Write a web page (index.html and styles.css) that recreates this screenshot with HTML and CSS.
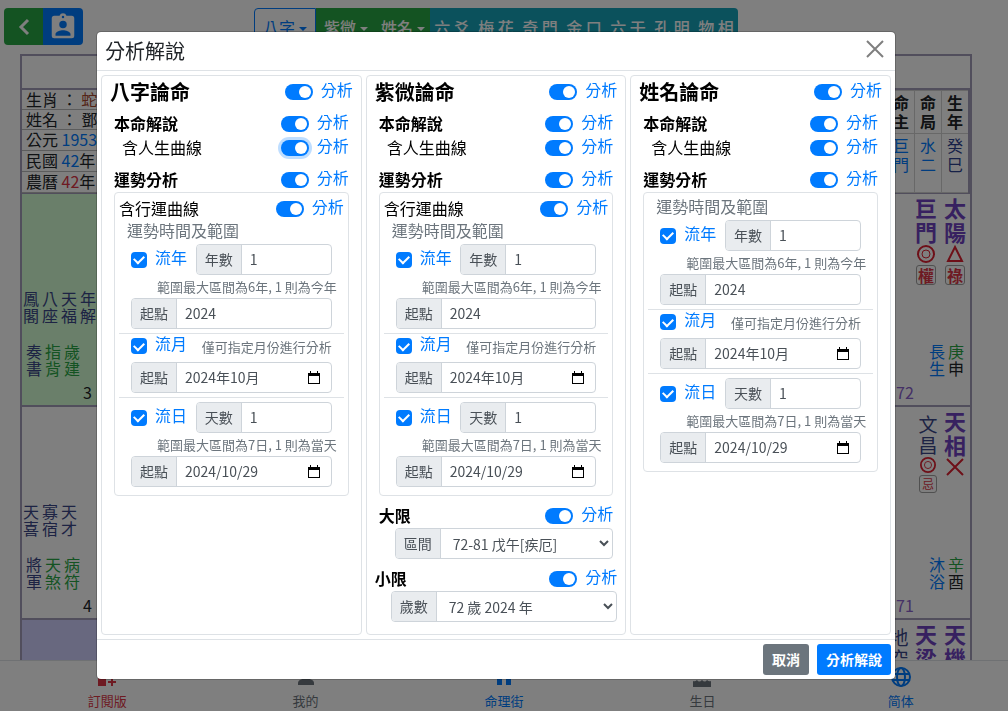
FILE: index.html
```html
<!DOCTYPE html>
<html lang="zh-TW">
<head>
<meta charset="utf-8">
<meta name="viewport" content="width=device-width, initial-scale=1">
<title>分析解說</title>
<link rel="stylesheet" href="styles.css">
</head>
<body>
<div class="page">
  <header class="topbar">
    <div class="tools">
      <button class="tool green" type="button" aria-label="返回"><svg width="24" height="24" viewBox="0 0 24 24" fill="none" stroke="currentColor" stroke-width="3"><path d="M16 5l-7 7 7 7"/></svg></button>
      <button class="tool blue" type="button" aria-label="個人資料"><svg width="30" height="30" viewBox="0 0 24 24" fill="currentColor"><path d="M19 3h-4.2a3 3 0 0 0-5.600 0H5a2 2 0 0 0-2 2v14a2 2 0 0 0 2 2h14a2 2 0 0 0 2-2V5a2 2 0 0 0-2-2zm-7 0a1 1 0 1 1 0 2 1 1 0 0 1 0-2zm0 4a3 3 0 1 1 0 6 3 3 0 0 1 0-6zm6 12H6v-1.400c0-2 4-3.100 6-3.100s6 1.100 6 3.100z"/></svg></button>
    </div>
    <nav class="tabs">
      <button class="tab outline caret" type="button">八字</button>
      <button class="tab green caret" type="button">紫微</button>
      <button class="tab green caret" type="button">姓名</button>
      <button class="tab teal" type="button">六 爻</button>
      <button class="tab teal" type="button">梅 花</button>
      <button class="tab teal" type="button">奇 門</button>
      <button class="tab teal" type="button">金 口</button>
      <button class="tab teal" type="button">六 壬</button>
      <button class="tab teal" type="button">孔 明</button>
      <button class="tab teal" type="button">物 相</button>
    </nav>
  </header>

  <main class="main">
    <div class="chart">
      <div class="chart-title"></div>
      <div class="chart-info">
        <div class="person">
          <p>生肖 ： <span class="brown">蛇</span></p>
          <p>姓名 ： 鄧</p>
          <p>公元 <span class="azure">1953</span></p>
          <p>民國 <span class="azure">42</span>年</p>
          <p>農曆 <span class="red">42</span>年</p>
        </div>
        <table class="birth">
          <tr><th>命主</th><th>命局</th><th>生年</th></tr>
          <tr><td class="azure">巨門</td><td class="azure">水二</td><td class="navy">癸巳</td></tr>
        </table>
      </div>
      <div class="row">
        <div class="cell mint">
          <div class="stars"><span>鳳閣</span><span>八座</span><span>天福</span><span>年解</span></div>
          <div class="stars gods"><span>奏書</span><span class="leaf">指背</span><span class="leaf">歲建</span></div>
          <div class="num">3</div>
        </div>
        <div class="cell right">
          <div class="majors">
            <div class="major"><b>巨門</b><svg width="18" height="18" viewBox="0 0 18 18" class="mark"><circle cx="9" cy="9" r="8"/><circle class="thin" cx="9" cy="9" r="4"/></svg><i class="chip">權</i></div>
            <div class="major"><b>太陽</b><svg width="18" height="18" viewBox="0 0 18 18" class="mark"><path d="M9 2l7 14H2z"/></svg><i class="chip">祿</i></div>
          </div>
          <div class="stars branch"><span class="azure">長生</span><span><em class="leaf">庚</em><em class="dark">申</em></span></div>
          <div class="age">72</div>
        </div>
      </div>
      <div class="row">
        <div class="cell">
          <div class="stars"><span>天喜</span><span>寡宿</span><span>天才</span></div>
          <div class="stars gods"><span>將軍</span><span class="leaf">天煞</span><span class="leaf">病符</span></div>
          <div class="num">4</div>
        </div>
        <div class="cell right">
          <div class="majors">
            <div class="major minor"><span>文昌</span><svg width="16" height="16" viewBox="0 0 18 18" class="mark"><circle cx="9" cy="9" r="8"/><circle class="thin" cx="9" cy="9" r="4"/></svg><i class="chip">忌</i></div>
            <div class="major"><b>天相</b><svg width="18" height="18" viewBox="0 0 18 18" class="mark"><path d="M1 1l16 16M17 1L1 17"/></svg></div>
          </div>
          <div class="stars branch"><span class="azure">沐浴</span><span><em class="leaf">辛</em><em class="dark">酉</em></span></div>
          <div class="age">71</div>
        </div>
      </div>
      <div class="row">
        <div class="cell lilac"></div>
        <div class="cell right">
          <div class="majors">
            <div class="major minor"><span>地空</span></div>
            <div class="major"><b>天梁</b></div>
            <div class="major"><b>天機</b></div>
          </div>
        </div>
      </div>
    </div>
  </main>

  <nav class="bottom">
    <a class="red" href="#"><svg width="22" height="22" viewBox="0 0 22 22" fill="currentColor"><path d="M2 2h8v8H2zM12 2h8v8h-8zM2 12h8v8H2zM15 12h2v3h3v2h-3v3h-2v-3h-3v-2h3z"/></svg>訂閱版</a>
    <a href="#"><svg width="22" height="22" viewBox="0 0 22 22" fill="currentColor"><circle cx="11" cy="6" r="5"/><path d="M3 19v-2c0-6 16-6 16 0v2z"/></svg>我的</a>
    <a class="azure" href="#"><svg width="22" height="22" viewBox="0 0 22 22" fill="currentColor"><path d="M2 5l9-4 9 4v3H2zM4 9h5v10H4zM13 9h5v10h-5z"/></svg>命理街</a>
    <a href="#"><svg width="22" height="22" viewBox="0 0 22 22" fill="currentColor"><path d="M10 1h2v6h6q2 0 2 3v2q-2 2-4 0-2 2-5 0-3 2-5 0-2 2-4 0v-2q0-3 2-3h6zM2 15q2 1 4-1 2 3 5 0 3 3 5 0 2 2 4 1v6H2z"/></svg>生日</a>
    <a class="azure" href="#"><svg width="22" height="22" viewBox="0 0 22 22" fill="none" stroke="currentColor" stroke-width="2"><circle cx="11" cy="11" r="9"/><ellipse cx="11" cy="11" rx="4" ry="9"/><path d="M3 8h16M3 14h16"/></svg>简体</a>
  </nav>
</div>

<div class="backdrop">
  <section class="modal" role="dialog" aria-modal="true" aria-labelledby="dialog-title">
    <header class="modal-head">
      <h1 id="dialog-title">分析解說</h1>
      <button class="close" type="button" aria-label="關閉"><svg width="18" height="18" viewBox="0 0 18 18" fill="none" stroke="currentColor" stroke-width="2"><path d="M1 1l16 16M17 1L1 17"/></svg></button>
    </header>

    <div class="modal-body">
      <div class="card">
        <div class="line title"><h2>八字論命</h2><label class="switch"><input type="checkbox" checked><span>分析</span></label></div>
        <div class="inner">
          <div class="line"><h3>本命解說</h3><label class="switch"><input type="checkbox" checked><span>分析</span></label></div>
          <div class="line sub"><p>含人生曲線</p><label class="switch"><input class="focus" type="checkbox" checked><span>分析</span></label></div>
          <div class="line section"><h3>運勢分析</h3><label class="switch"><input type="checkbox" checked><span>分析</span></label></div>
          <div class="box">
            <div class="line"><p>含行運曲線</p><label class="switch"><input type="checkbox" checked><span>分析</span></label></div>
            <p class="caption">運勢時間及範圍</p>
            <div class="block">
              <div class="pick"><label class="check"><input type="checkbox" checked><span>流年</span></label><div class="group"><label for="a-years">年數</label><input id="a-years" type="text" value="1"></div></div>
              <small class="hint">範圍最大區間為6年, 1 則為今年</small>
              <div class="group"><label for="a-year">起點</label><input id="a-year" type="text" value="2024"></div>
            </div>
            <div class="block monthly">
              <div class="pick"><label class="check"><input type="checkbox" checked><span>流月</span></label><small>僅可指定月份進行分析</small></div>
              <div class="group date"><label for="a-month">起點</label><input id="a-month" type="text" value="2024年10月"><button type="button" aria-label="選擇月份"><svg width="14" height="14" viewBox="0 0 14 14"><path d="M3 0h1v2h6V0h1v2h2v11H1V2h2zM2 5v7h10V5z" fill-rule="evenodd"/></svg></button></div>
            </div>
            <div class="block">
              <div class="pick"><label class="check"><input type="checkbox" checked><span>流日</span></label><div class="group"><label for="a-days">天數</label><input id="a-days" type="text" value="1"></div></div>
              <small class="hint">範圍最大區間為7日, 1 則為當天</small>
              <div class="group date"><label for="a-date">起點</label><input id="a-date" type="text" value="2024/10/29"><button type="button" aria-label="選擇日期"><svg width="14" height="14" viewBox="0 0 14 14"><path d="M3 0h1v2h6V0h1v2h2v11H1V2h2zM2 5v7h10V5z" fill-rule="evenodd"/></svg></button></div>
            </div>
          </div>
        </div>
      </div>

      <div class="card">
        <div class="line title"><h2>紫微論命</h2><label class="switch"><input type="checkbox" checked><span>分析</span></label></div>
        <div class="inner">
          <div class="line"><h3>本命解說</h3><label class="switch"><input type="checkbox" checked><span>分析</span></label></div>
          <div class="line sub"><p>含人生曲線</p><label class="switch"><input type="checkbox" checked><span>分析</span></label></div>
          <div class="line section"><h3>運勢分析</h3><label class="switch"><input type="checkbox" checked><span>分析</span></label></div>
          <div class="box">
            <div class="line"><p>含行運曲線</p><label class="switch"><input type="checkbox" checked><span>分析</span></label></div>
            <p class="caption">運勢時間及範圍</p>
            <div class="block">
              <div class="pick"><label class="check"><input type="checkbox" checked><span>流年</span></label><div class="group"><label for="b-years">年數</label><input id="b-years" type="text" value="1"></div></div>
              <small class="hint">範圍最大區間為6年, 1 則為今年</small>
              <div class="group"><label for="b-year">起點</label><input id="b-year" type="text" value="2024"></div>
            </div>
            <div class="block monthly">
              <div class="pick"><label class="check"><input type="checkbox" checked><span>流月</span></label><small>僅可指定月份進行分析</small></div>
              <div class="group date"><label for="b-month">起點</label><input id="b-month" type="text" value="2024年10月"><button type="button" aria-label="選擇月份"><svg width="14" height="14" viewBox="0 0 14 14"><path d="M3 0h1v2h6V0h1v2h2v11H1V2h2zM2 5v7h10V5z" fill-rule="evenodd"/></svg></button></div>
            </div>
            <div class="block">
              <div class="pick"><label class="check"><input type="checkbox" checked><span>流日</span></label><div class="group"><label for="b-days">天數</label><input id="b-days" type="text" value="1"></div></div>
              <small class="hint">範圍最大區間為7日, 1 則為當天</small>
              <div class="group date"><label for="b-date">起點</label><input id="b-date" type="text" value="2024/10/29"><button type="button" aria-label="選擇日期"><svg width="14" height="14" viewBox="0 0 14 14"><path d="M3 0h1v2h6V0h1v2h2v11H1V2h2zM2 5v7h10V5z" fill-rule="evenodd"/></svg></button></div>
            </div>
          </div>
          <div class="line section"><h3>大限</h3><label class="switch"><input type="checkbox" checked><span>分析</span></label></div>
          <div class="group indent"><label for="decade">區間</label><select id="decade"><option>72-81 戊午[疾厄]</option></select></div>
        </div>
        <div class="line section"><h3>小限</h3><label class="switch"><input type="checkbox" checked><span>分析</span></label></div>
        <div class="group indent"><label for="age">歲數</label><select id="age"><option>72 歲 2024 年</option></select></div>
      </div>

      <div class="card">
        <div class="line title"><h2>姓名論命</h2><label class="switch"><input type="checkbox" checked><span>分析</span></label></div>
        <div class="inner">
          <div class="line"><h3>本命解說</h3><label class="switch"><input type="checkbox" checked><span>分析</span></label></div>
          <div class="line sub"><p>含人生曲線</p><label class="switch"><input type="checkbox" checked><span>分析</span></label></div>
          <div class="line section"><h3>運勢分析</h3><label class="switch"><input type="checkbox" checked><span>分析</span></label></div>
          <div class="box">
            <p class="caption">運勢時間及範圍</p>
            <div class="block">
              <div class="pick"><label class="check"><input type="checkbox" checked><span>流年</span></label><div class="group"><label for="c-years">年數</label><input id="c-years" type="text" value="1"></div></div>
              <small class="hint">範圍最大區間為6年, 1 則為今年</small>
              <div class="group"><label for="c-year">起點</label><input id="c-year" type="text" value="2024"></div>
            </div>
            <div class="block monthly">
              <div class="pick"><label class="check"><input type="checkbox" checked><span>流月</span></label><small>僅可指定月份進行分析</small></div>
              <div class="group date"><label for="c-month">起點</label><input id="c-month" type="text" value="2024年10月"><button type="button" aria-label="選擇月份"><svg width="14" height="14" viewBox="0 0 14 14"><path d="M3 0h1v2h6V0h1v2h2v11H1V2h2zM2 5v7h10V5z" fill-rule="evenodd"/></svg></button></div>
            </div>
            <div class="block">
              <div class="pick"><label class="check"><input type="checkbox" checked><span>流日</span></label><div class="group"><label for="c-days">天數</label><input id="c-days" type="text" value="1"></div></div>
              <small class="hint">範圍最大區間為7日, 1 則為當天</small>
              <div class="group date"><label for="c-date">起點</label><input id="c-date" type="text" value="2024/10/29"><button type="button" aria-label="選擇日期"><svg width="14" height="14" viewBox="0 0 14 14"><path d="M3 0h1v2h6V0h1v2h2v11H1V2h2zM2 5v7h10V5z" fill-rule="evenodd"/></svg></button></div>
            </div>
          </div>
        </div>
      </div>
    </div>

    <footer class="modal-foot">
      <button class="btn gray" type="button">取消</button>
      <button class="btn primary" type="button">分析解說</button>
    </footer>
  </section>
</div>
</body>
</html>
```

FILE: styles.css
```css
* { box-sizing: border-box; }
body { margin: 0; background: #fff; color: #212529; font: 16px/24px "Noto Sans CJK TC", sans-serif; }
h1, h2, h3, p { margin: 0; }
button, input, select { font: inherit; }
button { border: 0; cursor: pointer; }
a { text-decoration: none; }

.page { display: flex; flex-direction: column; height: 100vh; overflow: hidden; }
.azure { color: #007bff; }
.navy { color: #2c4290; }
.leaf { color: #28a745; }
.brown { color: #a8482c; }
.red { color: #dc3545; }
.dark { color: #212529; }

.topbar { display: flex; padding: 8px 20px 8px 4px; }
.tools { display: flex; flex: 1; }
.tool { display: flex; align-items: center; justify-content: center; width: 39px; height: 37px; padding: 0; color: #fff; }
.tool:first-child { border-radius: 4px 0 0 4px; }
.tool:last-child { width: 40px; border-radius: 0 4px 4px 0; }
.green { background: #28a745; }
.blue { background: #007bff; }
.tabs { display: flex; }
.topbar::after { content: ""; flex: 1; }
.tab { height: 38px; padding: 0 4px; color: #fff; font-weight: 500; white-space: nowrap; }
.tab.green { padding: 0 5px 0 8px; }
.tab.outline { padding: 0 8px; border: 1px solid #007bff; border-radius: 4px 0 0 4px; background: #fff; color: #007bff; font-weight: 400; }
.tab.teal { min-width: 44px; background: #17a2b8; }
.tab:last-child { border-radius: 0 4px 4px 0; }
.caret::after { content: ""; display: inline-block; margin-left: 4px; vertical-align: 3px; border: 4px solid transparent; border-top-color: currentColor; border-bottom: 0; }

.main { flex: 1; min-height: 0; overflow: hidden; padding: 0 36px 0 20px; }
.chart { border: 2px solid #a29cb8; }
.chart-title { height: 32px; }
.chart-info { display: flex; justify-content: space-between; height: 104px; border-top: 2px solid #a29cb8; }
.person { width: 240px; }
.person p { height: 21px; padding-left: 4px; border-bottom: 1px solid #b8b8b8; line-height: 18px; }
.person p:nth-child(-n+2) { height: 20px; }
.birth { border-collapse: collapse; border-right: 2px solid #a29cb8; line-height: 19px; }
.birth th, .birth td { width: 26px; padding: 2px 5px; border: 1px solid #d0d0d0; text-align: center; vertical-align: top; word-break: break-all; }
.birth th { height: 42px; font-weight: 600; }
.birth td { height: 59px; }
.row { display: flex; justify-content: space-between; height: 213px; border-top: 2px solid #a29cb8; }
.cell { display: flex; flex-direction: column; justify-content: flex-end; width: 237px; padding-bottom: 1px; }
.mint { background: #d4ffd4; }
.lilac { background: #d0d0ff; }
.stars { display: flex; gap: 3px; padding-left: 1px; color: #3a4788; line-height: 17px; }
.stars span { width: 16px; word-break: break-all; }
.stars em { display: block; font-style: normal; }
.stars.gods { margin-top: 19px; padding-left: 4px; }
.num { width: 70px; margin-top: 3px; color: #212529; text-align: right; }
.cell.right { align-items: flex-end; padding-right: 3px; }
.majors { display: flex; flex: 1; gap: 5px; }
.major { display: flex; flex-direction: column; align-items: center; gap: 2px; width: 24px; padding-top: 1px; color: #6f42c1; font-size: 22px; line-height: 24px; }
.major b, .major span { width: 22px; word-break: break-all; }
.major.minor { width: 20px; padding-top: 6px; color: #3a4788; font-size: 19px; line-height: 21px; }
.major.minor span { width: 19px; }
.mark { fill: none; stroke: #dc2030; stroke-width: 2; }
.thin { stroke-width: 1; }
.chip { width: 20px; border: 1px solid #a0a0a0; border-radius: 3px; color: #dc3545; font: 600 16px/18px "Noto Sans CJK TC", sans-serif; text-align: center; }
.minor .chip { width: 18px; font-size: 12px; font-weight: 400; line-height: 16px; }
.stars.branch { padding: 0 3px 0 0; }
.stars.branch .azure { color: #007bff; }
.age { width: 71px; margin-top: 3px; color: #8a62cc; }

.bottom { display: flex; height: 51px; padding: 5px 8px 0; border-top: 1px solid #dee2e6; }
.bottom a { display: flex; flex: 1; flex-direction: column; align-items: center; gap: 3px; font-size: 13px; line-height: 20px; }
.bottom a:not([class]) { color: #6c757d; }

.backdrop { display: flex; position: fixed; inset: 0; align-items: center; justify-content: center; padding-right: 16px; background: rgba(0, 0, 0, .5); }
.modal { display: flex; flex-direction: column; width: 100%; max-width: 800px; border: 1px solid rgba(0, 0, 0, .2); border-radius: 5px; background: #fff; background-clip: padding-box; }
.modal-head { display: flex; align-items: center; justify-content: space-between; padding: 4px 11px 4px 8px; border-bottom: 1px solid #dee2e6; }
.modal-head h1 { font-size: 20px; font-weight: 400; line-height: 30px; }
.close { display: flex; padding: 0 0 4px; background: none; color: #7f7f7f; }
.modal-body { display: grid; grid-template-columns: repeat(3, minmax(0, 1fr)); gap: 4px; padding: 4px; color: #000; }
.card { padding: 1px 8px 12px; border: 1px solid #dee2e6; border-radius: 4px; }
.inner { padding: 0 4px; }
.line { display: flex; align-items: center; justify-content: space-between; height: 24px; }
.line h3, .line p { padding-bottom: 2px; }
.line h3 { font-size: 16px; font-weight: 700; }
.line h2 { font-size: 20px; font-weight: 700; line-height: 30px; }
.line.title { height: 30px; margin-bottom: 5px; }
.line.sub { padding-left: 8px; }
.line.section { margin-top: 8px; }

.switch, .check { display: flex; align-items: center; gap: 8px; color: #007bff; }
.switch span, .check span { padding-bottom: 5px; line-height: 19px; }
.switch input, .check input { appearance: none; flex: none; margin: 0; height: 16px; background: #007bff; }
.switch input { display: flex; justify-content: flex-end; width: 28px; padding: 2px; border-radius: 8px; }
.switch input::before { content: ""; width: 12px; height: 12px; border-radius: 50%; background: #fff; }
.switch input.focus { box-shadow: 0 0 0 3px rgba(0, 123, 255, .25); }
.check input { display: flex; align-items: center; justify-content: center; width: 16px; border-radius: 4px; }
.check input::before { content: ""; width: 8px; height: 5px; margin-bottom: 2px; border: solid #fff; border-width: 0 0 2px 2px; transform: rotate(-45deg); }

.box { padding: 2px 4px 4px; border: 1px solid #dee2e6; border-radius: 4px; }
.box .line { padding-top: 4px; }
.caption { height: 24px; padding-left: 8px; color: #6c757d; line-height: 22px; }
.block { padding: 4px 12px; color: #6c757d; }
.block + .block { border-top: 1px solid #dee2e6; }
.caption + .block { padding-top: 1px; }
.pick { display: flex; align-items: center; justify-content: space-between; gap: 8px; }
.pick .group { flex: none; width: 136px; }
.block.monthly { padding-top: 0; }
.monthly .pick { height: 24px; margin-bottom: 4px; }
small { font-size: 13px; line-height: 23px; white-space: nowrap; }
.hint { display: block; padding-left: 26px; }

.group { display: flex; height: 31px; border: 1px solid #ced4da; border-radius: 4px; background: #fff; color: #495057; font-size: 14px; line-height: 21px; }
.group label { flex: none; padding: 4px 8px; border-right: 1px solid #ced4da; border-radius: 3px 0 0 3px; background: #e9ecef; }
.group input, .group select { flex: 1; min-width: 0; width: 100%; padding: 4px 8px; border: 0; outline: 0; background: none; color: #495057; }
.group button { display: flex; align-items: center; padding: 0 10px; background: none; }
.indent { margin-left: 16px; }

.modal-foot { display: flex; justify-content: flex-end; gap: 8px; padding: 4px; border-top: 1px solid #dee2e6; }
.btn { height: 31px; padding: 0 9px; border-radius: 3px; color: #fff; font-size: 14px; font-weight: 600; line-height: 21px; }
.btn.gray { background: #6c757d; }
.btn.primary { background: #007bff; }
```
